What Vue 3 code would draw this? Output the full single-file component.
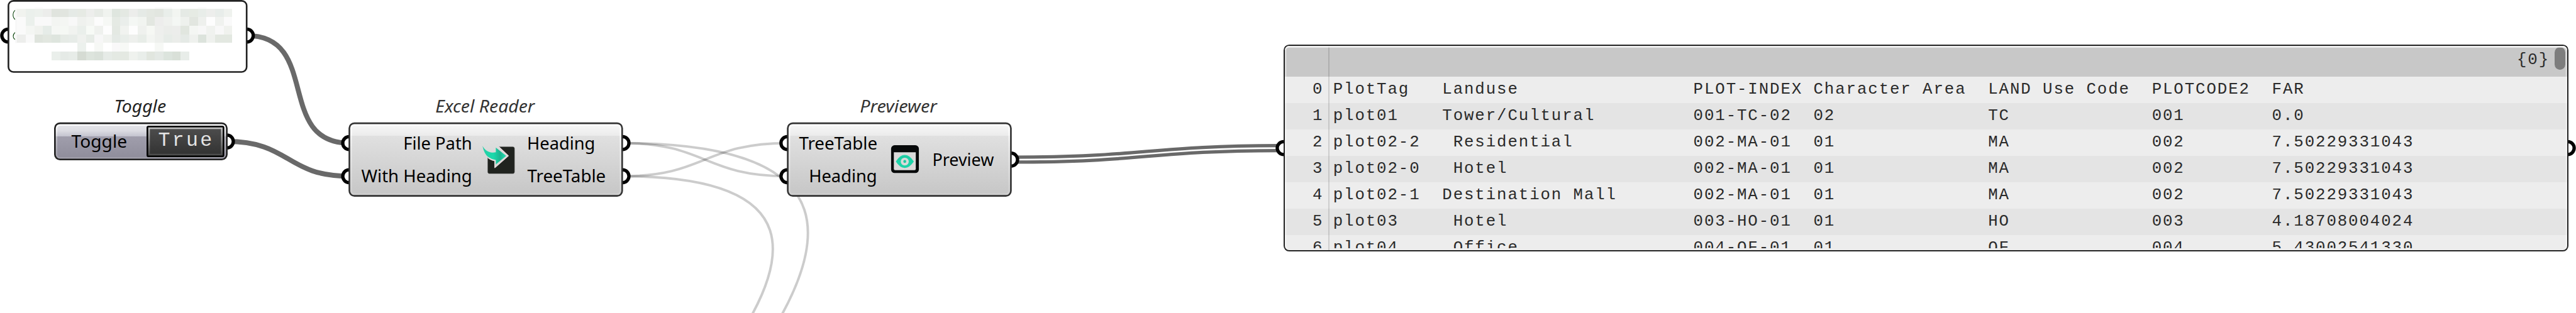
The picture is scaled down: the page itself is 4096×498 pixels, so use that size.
<script setup>
// All canvas coordinates are in canvas units; 1rem equals 100 units.
const mosaicRows = [
  { y: 26, start: 0, cells: 'f1f3ef ebf0ec edf1ed ecedeb e0e4de e1e5df e5eae6 e6eae4 edeeec e7ebe6 f0f3ef dfe6df e4e9e3 ecedeb e5eae6 e4e8e2 e2e6e0 e9eeea f2f5f1 e5eae5 e6ebe4 e8ede9 edeeec e8edea eff2ee' },
  { y: 52, start: 0, cells: 'fafafa ebf0ec f9f9f9 f9f9f9 f3f5f2 f4f6f3 f8f8f8 eff1ee f2f4f1 fcfcfc f6f8f5 e5eae4 eaeeeb f4f7f4 f1f4f0 e3e7e1 ededec eff1ee f4f7f4 eef1ed e2e6e0 eef0ed fdfdfd f0f2ef fafafa' },
  { y: 78, start: 0, cells: 'fafafa f4f6f3 f0f2ee e6ece8 f5f7f4 f5f8f4 f1f3f0 eaefeb f7faf6 eff1ee fdfdfd e4e9e3 f1f3f0 fdfdfd eff1ee f6f8f4 eeefed ebedea ecedeb e1e6df f4f6f3 f7f7f7 f0f2ef f8f8f8 f0f2ee' },
  { y: 104, start: 0, cells: 'edeeec f9f9f9 dfe4dd e2e7e0 dee5de e6ebe6 e7ece8 eff1ee e7ece7 f7f7f7 f1f3f0 e5eae6 e9eeea eef0ed e8ede8 f3f5f2 eef0ed e7ece8 ebedea e5eae6 eff1ee dce3dc eff1ee e3e8e1 e3e8e1' },
  { y: 130, start: 7, cells: 'ecf1ed ffffff f6f8f5 ffffff f9f8f9 f7f9f6 ffffff ffffff ffffff f6f8f5' },
  { y: 156, start: 4, cells: 'eaefeb e5eae6 e7ece8 d5dbd3 dde4dd dae1da e6ebe7 e4e9e3 e4e9e2 eff2ee e9eeea e1e6df e4e9e5 dce4dd d9e0d8 e8ede9' }
]
const mosaic = mosaicRows.flatMap(r =>
  r.cells.split(' ').map((c, i) => ({ x: 52 + (r.start + i) * 26, y: r.y, fill: '#' + c }))
)

// The tangent length of a wire is half the distance between its ends.
const wire = (x0, y0, x1, y1) => {
  const c = Math.hypot(x1 - x0, y1 - y0) / 2
  return `M${x0} ${y0}C${x0 + c} ${y0} ${x1 - c} ${y1} ${x1} ${y1}`
}
const solidWires = [wire(746, 107.5, 1055.5, 432.5), wire(686, 427.5, 1055.5, 532.5)]
const faintWires = [
  wire(1881.5, 432.5, 2380, 532.5),
  wire(1881.5, 532.5, 2380, 432.5),
  'M1881 532.5C4078 532.5 -2513 4337.5 -316 4337.5',
  'M1881 432.5C4590 432.5 -3537 5124.5 -828 5124.5'
]
const listWire = wire(3056, 482.5, 3880, 447.5)

const grips = [
  [25, 107.5], [746, 107.5], [685.7, 427.5],
  [1055.5, 432.5], [1055.5, 532.5], [1881.5, 432.5], [1881.5, 532.5],
  [2380, 432.5], [2380, 532.5], [3056, 482.5],
  [3880, 447.5], [7761, 447.5]
]
const components = [
  { x: 1053.5, w: 829.5 },
  { x: 2378.5, w: 679.5 }
]
const labels = [
  { t: 'Toggle', x: 345, y: 341, w: 157, k: 'title dark' },
  { t: 'Excel Reader', x: 1316, y: 341, w: 300, k: 'title' },
  { t: 'Previewer', x: 2599, y: 341, w: 233, k: 'title' },
  { t: 'Toggle', x: 216, y: 446, w: 168, k: '' },
  { t: 'File Path', x: 1219, y: 451.5, w: 208, k: '' },
  { t: 'With Heading', x: 1092, y: 551.5, w: 335, k: '' },
  { t: 'Heading', x: 1593, y: 451.5, w: 206, k: '' },
  { t: 'TreeTable', x: 1594, y: 551.5, w: 237, k: '' },
  { t: 'TreeTable', x: 2415, y: 451.5, w: 237, k: '' },
  { t: 'Heading', x: 2445, y: 551.5, w: 206, k: '' },
  { t: 'Preview', x: 2818, y: 501.5, w: 186, k: '' }
]

const rows = [
  ['PlotTag', 'Landuse', 'PLOT-INDEX', 'Character Area', 'LAND Use Code', 'PLOTCODE2', 'FAR'],
  ['plot01', 'Tower/Cultural', '001-TC-02', '02', 'TC', '001', '0.0'],
  ['plot02-2', ' Residential', '002-MA-01', '01', 'MA', '002', '7.50229331043'],
  ['plot02-0', ' Hotel', '002-MA-01', '01', 'MA', '002', '7.50229331043'],
  ['plot02-1', 'Destination Mall', '002-MA-01', '01', 'MA', '002', '7.50229331043'],
  ['plot03', ' Hotel', '003-HO-01', '01', 'HO', '003', '4.18708004024'],
  ['plot04', ' Office', '004-OF-01', '01', 'OF', '004', '5.43002541330']
]
</script>

<template>
  <main class="canvas">
    <svg class="graph" viewBox="0 0 7786 946" preserveAspectRatio="none">
      <defs>
        <linearGradient id="body" x1="0" y1="0" x2="0" y2="1">
          <stop offset="0" stop-color="#f9f9f9" />
          <stop offset="0.175" stop-color="#ebebeb" />
          <stop offset="0.175" stop-color="#e0e0e0" />
          <stop offset="1" stop-color="#c6c6c6" />
        </linearGradient>
        <linearGradient id="toggleBody" x1="0" y1="0" x2="0" y2="1">
          <stop offset="0" stop-color="#e6e6ea" />
          <stop offset="0.2" stop-color="#dddde3" />
          <stop offset="0.356" stop-color="#c4c4cf" />
          <stop offset="0.356" stop-color="#a09eac" />
          <stop offset="1" stop-color="#8e8c9a" />
        </linearGradient>
        <linearGradient id="rim" x1="0" y1="0" x2="0" y2="1">
          <stop offset="0" stop-color="#fff" stop-opacity="0.9" />
          <stop offset="0.35" stop-color="#fff" stop-opacity="0.4" />
          <stop offset="1" stop-color="#fff" stop-opacity="0.15" />
        </linearGradient>
        <linearGradient id="valueRim" x1="0" y1="0" x2="0" y2="1">
          <stop offset="0" stop-color="#c4c4c4" />
          <stop offset="1" stop-color="#4a4a4a" />
        </linearGradient>
        <linearGradient id="valueBody" x1="0" y1="0" x2="0" y2="1">
          <stop offset="0" stop-color="#4c4c4c" />
          <stop offset="1" stop-color="#333" />
        </linearGradient>
        <linearGradient id="arrow" x1="0" y1="0" x2="1" y2="0">
          <stop offset="0" stop-color="#25cfa6" />
          <stop offset="0.45" stop-color="#1bd9ab" />
          <stop offset="0.75" stop-color="#1cb490" />
          <stop offset="1" stop-color="#22e0b4" />
        </linearGradient>
      </defs>

      <path v-for="d in faintWires" :key="d" :d="d" class="wire faint" />
      <path v-for="d in solidWires" :key="d" :d="d" class="wire solid" />
      <path :d="listWire" class="wire list" />
      <path :d="listWire" class="wire gap" />

      <circle v-for="(g, i) in grips" :key="i" :cx="g[0]" :cy="g[1]" r="19.5" class="grip" />

      <!-- file path node with its value pixelated -->
      <rect x="25.5" y="2.5" width="720" height="215" rx="15" class="paper" />
      <path class="paren" d="M46 31Q39.500 36 39.500 45T46 59M46 98Q40 102 40 109T46 119.500" />
      <rect x="46" y="26" width="6" height="104" fill="#f7f7f7" />
      <rect x="104" y="22" width="26" height="4" fill="#fbfbfb" />
      <rect x="468" y="22" width="52" height="4" fill="#f9f9fa" />
      <rect x="598" y="22" width="26" height="4" fill="#f9f9fa" />
      <g shape-rendering="crispEdges">
        <rect v-for="(m, i) in mosaic" :key="i" :x="m.x" :y="m.y" width="26" height="26" :fill="m.fill" />
      </g>

      <!-- boolean toggle -->
      <rect x="166" y="372.500" width="519.500" height="109.500" rx="15" fill="url(#toggleBody)" />
      <rect x="170.500" y="377.500" width="510.500" height="100" rx="11" class="rim" />
      <rect x="166" y="372.500" width="519.500" height="109.500" rx="15" class="frame dark" />
      <rect x="443" y="380" width="235" height="95" rx="6" fill="#000" />
      <rect x="448" y="385" width="225" height="85" fill="url(#valueRim)" />
      <rect x="453" y="390" width="215" height="75" fill="url(#valueBody)" />
      <text x="478" y="440" textLength="163" lengthAdjust="spacing" class="value">True</text>

      <g v-for="c in components" :key="c.x">
        <rect :x="c.x + 2.5" y="372.500" :width="c.w - 5" height="219.500" rx="15" fill="url(#body)" />
        <rect :x="c.x + 7.5" y="377.500" :width="c.w - 15" height="209.500" rx="11" class="rim" />
        <rect :x="c.x + 2.5" y="372.500" :width="c.w - 5" height="219.500" rx="15" class="frame" />
      </g>

      <text v-for="(l, i) in labels" :key="'l' + i" :x="l.x" :y="l.y" :textLength="l.w"
        lengthAdjust="spacingAndGlyphs" class="label" :class="l.k">{{ l.t }}</text>

      <!-- import arrow icon -->
      <g transform="translate(1400 380) scale(0.33333)">
        <path fill="#20231f" stroke="#777" stroke-width="2" d="M326 190H448Q466 190 466 208V417Q466 435 448 435H240Q222 435 222 417V290Q250 312 284 320V384L412 273Z" />
        <path fill="none" stroke="#e6dcdd" stroke-width="9" stroke-linejoin="round" d="M324 194L407 273L288 378V318Q250 310 226 290" />
        <path fill="url(#arrow)" d="M175 184Q202 232 244 240Q270 246 296 241V198L390 273L296 350V311Q255 304 225 282Q190 254 175 184Z" />
      </g>

      <!-- window with eye icon -->
      <g transform="translate(2640 400) scale(0.33333)">
        <rect x="160" y="117" width="252" height="252" rx="32" fill="#07090a" />
        <path fill="#dadada" d="M185 180H384V331Q384 343 372 343H197Q185 343 185 331Z" />
        <path fill="#1fd3a9" fill-rule="evenodd" d="M203 265Q240 205 284 205T366 265Q328 323 284 323T203 265ZM284 230A36 35 0 1 0 284.100 230Z" />
        <path fill="none" stroke="#22ba97" stroke-width="4" d="M225 250Q250 221 284 221T343 250" />
        <circle cx="284" cy="264" r="13" fill="#1fc9a1" />
      </g>
    </svg>

    <section class="panel">
      <header class="path"><span>{0}</span></header>
      <div class="rows">
        <div v-for="(r, i) in rows" :key="i" class="row">
          <span class="index">{{ i }}</span>
          <span v-for="(c, j) in r" :key="j" class="cell">{{ c }}</span>
        </div>
      </div>
      <i class="divider"></i>
      <i class="scroll"></i>
      <i class="shine"></i>
    </section>
  </main>
</template>

<style>
html { font-size: 52.607px; background: #fff; }
body { overflow: hidden; }
</style>

<style scoped>
.canvas { position: relative; width: 4096px; height: 498px; overflow: hidden; background: #fff; }
.graph { display: block; width: 4096px; height: 498px; }
.wire { fill: none; }
.faint { stroke: #000; stroke-opacity: 0.2; stroke-width: 7.5; }
.solid { stroke: #696969; stroke-width: 15; }
.list { stroke: #696969; stroke-width: 25; }
.gap { stroke: #fff; stroke-width: 5; }
.grip { fill: #fff; stroke: #000; stroke-width: 10; }
.paper { fill: #fff; stroke: #222; stroke-width: 5; }
.paren { fill: none; stroke: #003c00; stroke-width: 2; }
.rim { fill: none; stroke: url(#rim); stroke-width: 5; }
.frame { fill: none; stroke: #333; stroke-width: 5; }
.frame.dark { stroke: #222; }
.label { font: 52px "Noto Sans", "Open Sans", sans-serif; fill: #000; }
.label.title { font-style: italic; fill: #333; }
.label.title.dark { fill: #222; }
.value { font: 60px "Liberation Mono", monospace; fill: #e4e4e4; }

.panel {
  position: absolute;
  left: 38.79rem;
  top: 1.35rem;
  box-sizing: border-box;
  width: 38.84rem;
  height: 6.245rem;
  border: 0.05rem solid #222;
  border-radius: 0.17rem;
  overflow: hidden;
  display: flex;
  flex-direction: column;
  background: #ededed;
  color: #2a2a2a;
  font: 0.49rem "Liberation Mono", monospace;
  letter-spacing: 0.036rem;
  white-space: pre;
}
.path {
  flex: none;
  display: flex;
  justify-content: flex-end;
  box-sizing: border-box;
  height: 0.925rem;
  padding: 0.19rem 0.53rem 0 0;
  background: #c8c8c8;
  line-height: 0.5rem;
}
.rows { height: 5.195rem; overflow: hidden; }
.row {
  display: grid;
  grid-template-columns: 1.445rem 3.3rem 7.59rem 3.63rem 5.28rem 4.95rem 3.63rem 1fr;
  height: 0.8rem;
  line-height: 0.79rem;
}
.row:nth-child(even) { background: #e4e4e4; }
.index { padding-left: 0.845rem; }
.cell { padding-left: 0.02rem; }
.divider { position: absolute; left: 1.31rem; top: 0; bottom: 0; width: 0.05rem; background: rgba(0, 0, 0, 0.13); }
.scroll { position: absolute; right: 0.05rem; top: 0.03rem; width: 0.32rem; height: 0.7rem; border-radius: 0.16rem; background: #7d7d7d; }
.shine {
  position: absolute;
  inset: 0;
  border-radius: 0.12rem;
  box-shadow: inset 0 0.05rem rgba(255, 255, 255, 0.75), inset 0.05rem 0 rgba(255, 255, 255, 0.35), inset -0.05rem 0 rgba(255, 255, 255, 0.35);
}
</style>
